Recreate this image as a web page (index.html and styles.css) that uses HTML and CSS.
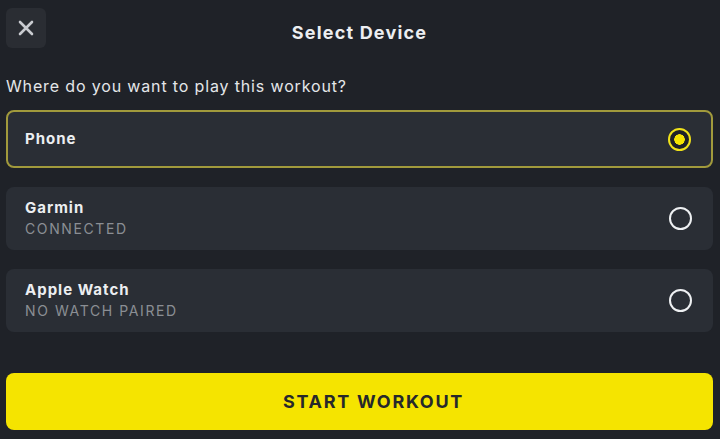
FILE: index.html
```html
<!DOCTYPE html>
<html lang="en">
<head>
  <meta charset="UTF-8" />
  <meta name="viewport" content="width=device-width, initial-scale=1.0"/>
  <title>Select Device</title>
  <link rel="stylesheet" href="styles.css">
</head>
<body>

  <header class="topbar">
    <button class="close-btn" aria-label="Close">
      <svg width="18" height="18" viewBox="0 0 18 18">
        <path d="M3 3 L15 15 M15 3 L3 15" stroke="#c9cbd0" stroke-width="2.6" stroke-linecap="round"/>
      </svg>
    </button>
    <h1>Select Device</h1>
  </header>

  <p class="question">Where do you want to play this workout?</p>

  <div class="devices">
    <div class="device selected">
      <div class="device-info">
        <div class="device-name">Phone</div>
      </div>
      <span class="radio"></span>
    </div>
    <div class="device">
      <div class="device-info">
        <div class="device-name">Garmin</div>
        <div class="device-status">CONNECTED</div>
      </div>
      <span class="radio"></span>
    </div>
    <div class="device">
      <div class="device-info">
        <div class="device-name">Apple Watch</div>
        <div class="device-status">NO WATCH PAIRED</div>
      </div>
      <span class="radio"></span>
    </div>
  </div>

  <button class="start-btn">START WORKOUT</button>

</body>
</html>
```

FILE: styles.css
```css
body {
  font-family: Inter, "Open Sans", sans-serif;
  margin: 0;
  padding: 8px 7px 0 6px;
  background: #1f2228;
  color: #eceef1;
}

.topbar {
  position: relative;
  height: 40px;
  display: flex;
  align-items: center;
  justify-content: center;
}

.close-btn {
  position: absolute;
  left: 0;
  top: 0;
  width: 40px;
  height: 40px;
  border: none;
  border-radius: 6px;
  background: #2a2d33;
  display: flex;
  align-items: center;
  justify-content: center;
  padding: 0;
}

.topbar h1 {
  margin: 0;
  padding-top: 8px;
  font-size: 18px;
  font-weight: 700;
  letter-spacing: 1.2px;
}

.question {
  margin: 28px 0 14px;
  font-size: 16px;
  line-height: 20px;
  letter-spacing: 0.85px;
  color: #e4e6e9;
}

.devices {
  display: flex;
  flex-direction: column;
  gap: 19px;
}

.device {
  display: flex;
  align-items: center;
  justify-content: space-between;
  height: 63px;
  box-sizing: border-box;
  padding: 0 21px 0 19px;
  background: #2a2e35;
  border-radius: 8px;
}

.device.selected {
  height: 58px;
  border: 2px solid #a19a3c;
  padding-left: 17px;
  padding-right: 20px;
}

.device-name {
  font-size: 15px;
  font-weight: 700;
  line-height: 20px;
  letter-spacing: 1px;
}

.device-status {
  font-size: 14px;
  line-height: 22px;
  color: #8b8e94;
  letter-spacing: 1.6px;
}

.radio {
  width: 19px;
  height: 19px;
  border: 2.5px solid #eef0f2;
  border-radius: 50%;
  box-sizing: content-box;
}

.selected .radio {
  border-color: #f0e21a;
  background: radial-gradient(circle, #f5e400 0 5px, #1f2228 5.5px);
}

.start-btn {
  display: block;
  width: 100%;
  height: 57px;
  margin-top: 41px;
  padding: 0 0 0 28px;
  border: none;
  border-radius: 8px;
  background: #f5e400;
  color: #26282b;
  font-family: Inter, "Open Sans", sans-serif;
  font-size: 18px;
  font-weight: 700;
  letter-spacing: 1.7px;
}
```
